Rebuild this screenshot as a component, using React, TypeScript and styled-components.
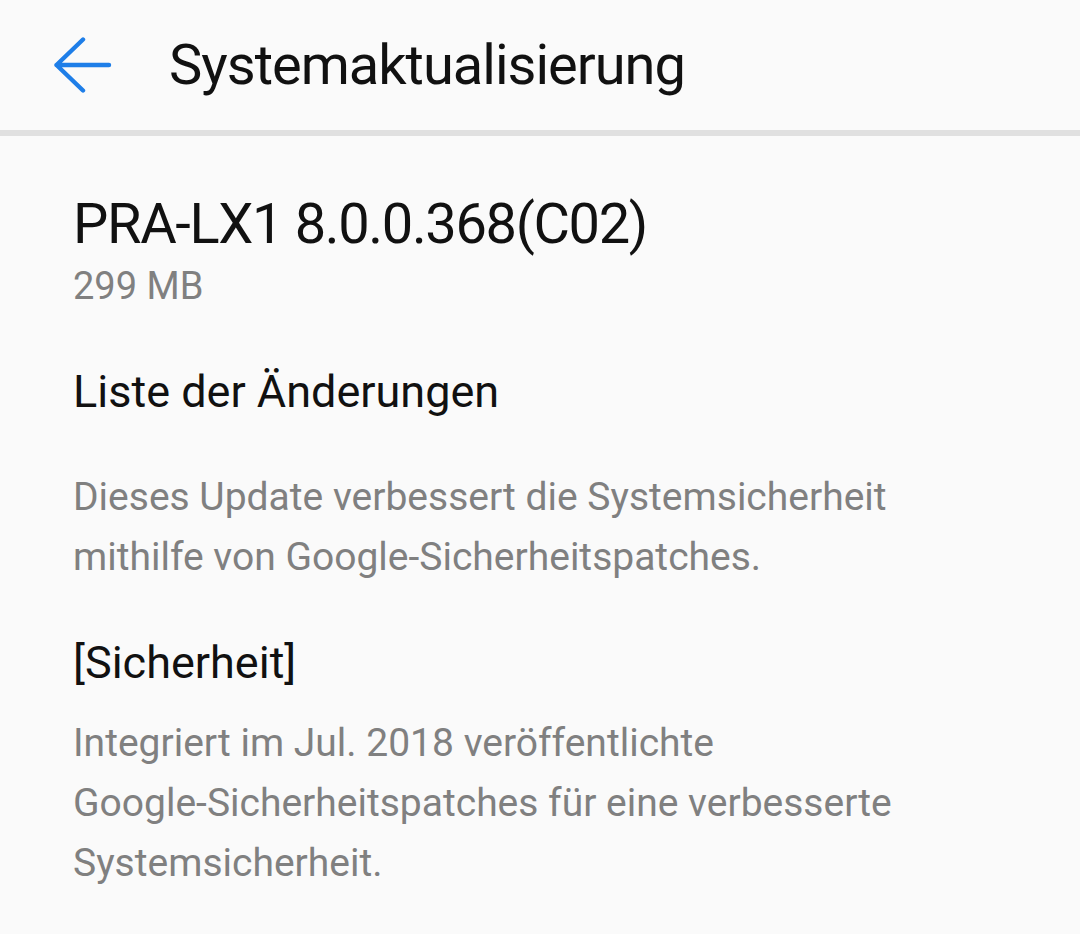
import styled, { createGlobalStyle } from 'styled-components';

const GlobalStyle = createGlobalStyle`
    html, body {
        margin: 0;
        padding: 0;
        background: #fafafa;
    }
    body {
        font-family: Roboto, "Noto Sans", sans-serif;
        -webkit-font-smoothing: antialiased;
    }
`;

const Screen = styled.div`
    width: 1080px;
    height: 934px;
    background: #fafafa;
    overflow: hidden;
`;

const Header = styled.header`
    height: 130px;
    display: flex;
    align-items: center;
    padding-left: 54px;
    border-bottom: 6px solid #e0e0e0;
`;

const BackButton = styled.button`
    width: 58px;
    height: 56px;
    padding: 0;
    border: none;
    background: none;
    display: flex;
    align-items: center;
    margin-right: 57px;
`;

const Title = styled.h1`
    margin: 0;
    font-size: 56px;
    line-height: 130px;
    font-weight: 400;
    letter-spacing: -1px;
    color: #111;
`;

const Content = styled.main`
    padding: 0 73px;
`;

const Version = styled.div`
    margin-top: 56px;
    font-size: 56px;
    line-height: 64px;
    letter-spacing: -1.35px;
    color: #111;
`;

const Size = styled.div`
    margin-top: 6px;
    font-size: 38px;
    line-height: 48px;
    color: #808080;
`;

const Heading = styled.h2<{ $gap: number }>`
    margin: ${(p) => p.$gap}px 0 0;
    font-size: 45px;
    line-height: 56px;
    font-weight: 400;
    color: #111;
`;

const Body = styled.p<{ $gap: number }>`
    margin: ${(p) => p.$gap}px 0 0;
    font-size: 39px;
    line-height: 60px;
    color: #808080;
`;

const BackArrow = () => (
    <svg width="58" height="56" viewBox="0 0 58 56" fill="none">
        <path
            d="M29 2.5 L2.5 28 L29 53.5 M2.5 28 H55"
            stroke="#1e7ee8"
            strokeWidth="4.4"
            strokeLinecap="round"
            strokeLinejoin="round"
        />
    </svg>
);

const App = () => {
    return (
        <Screen>
            <GlobalStyle />
            <Header>
                <BackButton aria-label="Zurück">
                    <BackArrow />
                </BackButton>
                <Title>Systemaktualisierung</Title>
            </Header>
            <Content>
                <Version>PRA-LX1 8.0.0.368(C02)</Version>
                <Size>299 MB</Size>
                <Heading $gap={54}>Liste der Änderungen</Heading>
                <Body $gap={47}>
                    Dieses Update verbessert die Systemsicherheit
                    <br />
                    mithilfe von Google-Sicherheitspatches.
                </Body>
                <Heading $gap={48}>[Sicherheit]</Heading>
                <Body $gap={22}>
                    Integriert im Jul. 2018 veröffentlichte
                    <br />
                    Google-Sicherheitspatches für eine verbesserte
                    <br />
                    Systemsicherheit.
                </Body>
            </Content>
        </Screen>
    );
};

export default App;
